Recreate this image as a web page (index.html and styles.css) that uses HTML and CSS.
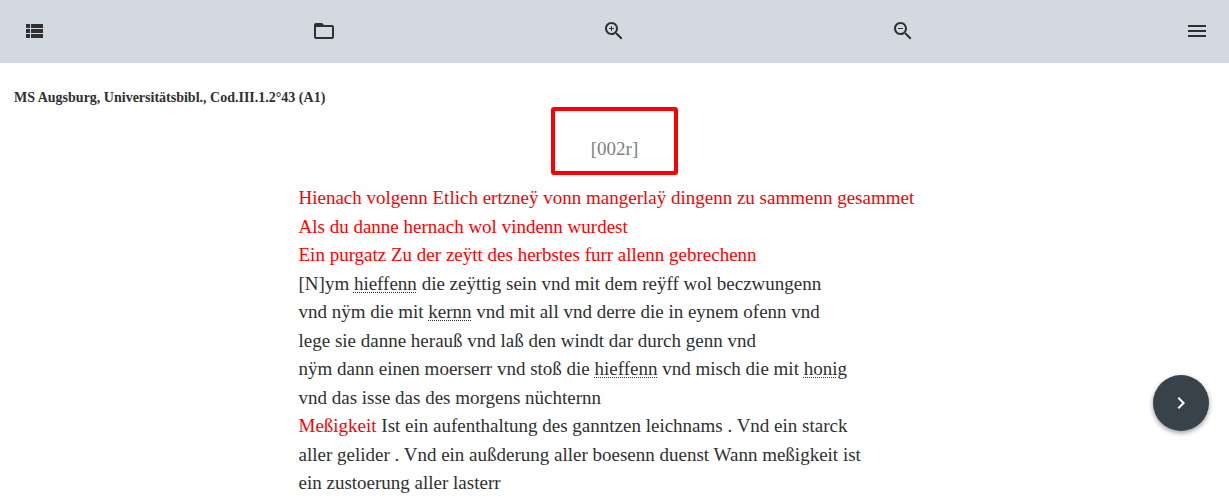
FILE: index.html
```html
<!DOCTYPE html>
<html lang="de">
<head>
<meta charset="utf-8">
<meta name="viewport" content="width=device-width, initial-scale=1">
<title>MS Augsburg, Universitätsbibl., Cod.III.1.2°43 (A1)</title>
<link rel="stylesheet" href="styles.css">
</head>
<body>
<header class="toolbar">
  <div class="tool"><button class="icon-button" type="button" aria-label="Liste"><svg viewBox="0 0 24 24"><path d="M4 14h4v-4H4v4zm0 5h4v-4H4v4zM4 9h4V5H4v4zm5 5h12v-4H9v4zm0 5h12v-4H9v4zM9 5v4h12V5H9z"/></svg></button></div>
  <div class="tool"><button class="icon-button" type="button" aria-label="Ordner"><svg viewBox="0 0 24 24"><path d="M20 6h-8l-2-2H4c-1.100 0-1.990.9-1.990 2L2 18c0 1.100.9 2 2 2h16c1.100 0 2-.9 2-2V8c0-1.100-.9-2-2-2zm0 12H4V8h16v10z"/></svg></button></div>
  <div class="tool"><button class="icon-button" type="button" aria-label="Vergrößern"><svg viewBox="0 0 24 24"><path d="M15.500 14h-.790l-.280-.270C15.410 12.590 16 11.110 16 9.500 16 5.910 13.090 3 9.500 3S3 5.910 3 9.500 5.910 16 9.500 16c1.610 0 3.090-.590 4.230-1.570l.270.280v.790l5 4.990L20.490 19l-4.990-5zm-6 0C7.010 14 5 11.990 5 9.500S7.010 5 9.500 5 14 7.010 14 9.500 11.990 14 9.500 14zM12 10h-2v2H9v-2H7V9h2V7h1v2h2v1z"/></svg></button></div>
  <div class="tool"><button class="icon-button" type="button" aria-label="Verkleinern"><svg viewBox="0 0 24 24"><path d="M15.500 14h-.790l-.280-.270C15.410 12.590 16 11.110 16 9.500 16 5.910 13.090 3 9.500 3S3 5.910 3 9.500 5.910 16 9.500 16c1.610 0 3.090-.590 4.230-1.570l.270.280v.790l5 4.990L20.490 19l-4.990-5zm-6 0C7.010 14 5 11.990 5 9.500S7.010 5 9.500 5 14 7.010 14 9.500 11.990 14 9.500 14zM7 9h5v1H7z"/></svg></button></div>
  <button class="icon-button menu-button" type="button" aria-label="Menü"><svg viewBox="0 0 24 24"><path d="M3 18h18v-2H3v2zm0-5h18v-2H3v2zm0-7v2h18V6H3z"/></svg></button>
</header>
<main class="page">
  <h1 class="source">MS Augsburg, Universitätsbibl., Cod.III.1.2°43 (A1)</h1>
  <div class="folio">[002r]</div>
  <article class="transcript">
    <div class="line rubric">Hienach volgenn Etlich ertzneÿ vonn mangerlaÿ dingenn zu sammenn gesammet</div>
    <div class="line rubric">Als du danne hernach wol vindenn wurdest</div>
    <div class="line rubric">Ein purgatz Zu der zeÿtt des herbstes furr allenn gebrechenn</div>
    <div class="line">[N]ym <span class="term">hieffenn</span> die zeÿttig sein vnd mit dem reÿff wol beczwungenn</div>
    <div class="line">vnd nÿm die mit <span class="term">kernn</span> vnd mit all vnd derre die in eynem ofenn vnd</div>
    <div class="line">lege sie danne herauß vnd laß den windt dar durch genn vnd</div>
    <div class="line">nÿm dann einen moerserr vnd stoß die <span class="term">hieffenn</span> vnd misch die mit <span class="term">honig</span></div>
    <div class="line">vnd das isse das des morgens nüchternn</div>
    <div class="line"><span class="rubric">Meßigkeit</span> Ist ein aufenthaltung des ganntzen leichnams . Vnd ein starck</div>
    <div class="line">aller gelider . Vnd ein außderung aller boesenn duenst Wann meßigkeit ist</div>
    <div class="line">ein zustoerung aller lasterr</div>
  </article>
</main>
<button class="next" type="button" aria-label="Nächste Seite"><svg viewBox="0 0 24 24"><path d="M10 6 8.590 7.410 13.170 12l-4.580 4.590L10 18l6-6z"/></svg></button>
</body>
</html>
```
FILE: styles.css
```css
* {
  box-sizing: border-box;
}

body {
  margin: 0;
  background: #fff;
  color: #303030;
  font-family: Junicode, "Liberation Serif", serif;
  font-size: 19px;
}

.toolbar {
  display: flex;
  padding: 19px 20px 20px 22px;
  background: #d2d9e0;
}

.tool {
  flex: 1;
  display: flex;
}

.icon-button {
  display: block;
  width: 24px;
  height: 24px;
  padding: 0;
  border: 0;
  background: none;
  color: #303030;
  cursor: pointer;
}

.menu-button {
  margin-left: 4px;
}

svg {
  display: block;
  width: 24px;
  height: 24px;
  fill: currentColor;
}

.page {
  padding: 26px 14px 0;
}

.source {
  margin: 0;
  font-size: 14px;
  line-height: 18px;
}

.folio {
  width: fit-content;
  margin: 0 auto;
  padding: 24px 36px 8px;
  border: 4px solid #f00;
  border-radius: 3px;
  color: #808080;
  line-height: 28px;
}

.transcript {
  max-width: 632px;
  margin: 9px auto 0;
  line-height: 1.5;
}

.rubric {
  color: #f00;
}

.term {
  text-decoration: underline dotted 1px;
  text-underline-offset: 2px;
}

.next {
  position: fixed;
  right: 20px;
  bottom: 69px;
  display: grid;
  place-items: center;
  width: 56px;
  height: 56px;
  padding: 0;
  border: 0;
  border-radius: 50%;
  background: #37424a;
  color: #fff;
  box-shadow: 0 2px 5px rgba(0, 0, 0, 0.4);
  cursor: pointer;
}
```
